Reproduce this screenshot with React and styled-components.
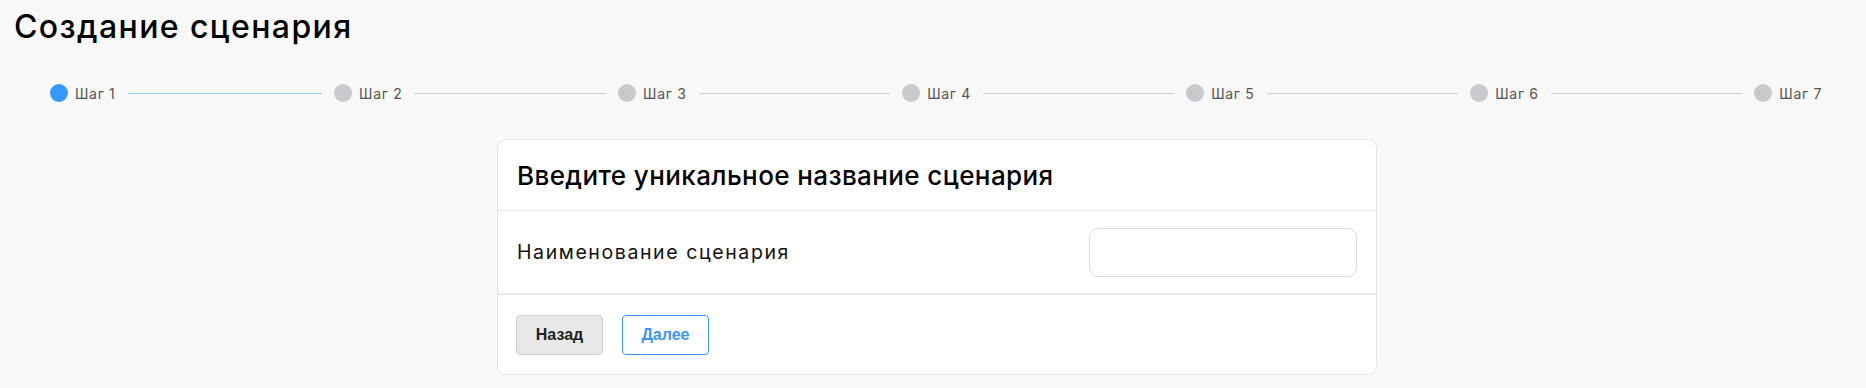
import React from 'react';
import styled, { createGlobalStyle } from 'styled-components';

const GlobalStyle = createGlobalStyle`
  html, body {
    margin: 0;
    padding: 0;
    background: #f8f8f8;
  }
  body {
    font-family: Inter, "Open Sans", sans-serif;
    color: #111;
  }
`;

const Page = styled.div`
  padding: 7px 0 0 14px;
`;

const Title = styled.h1`
  margin: 0;
  font-size: 32px;
  font-weight: 500;
  line-height: 40px;
  letter-spacing: 1.4px;
  color: #000;
`;

const Steps = styled.div`
  display: flex;
  align-items: center;
  width: 1772px;
  height: 20px;
  margin: 36px 0 0 36px;
`;

const Step = styled.div`
  display: flex;
  align-items: center;
  flex: ${(p) => (p.$last ? '0 0 auto' : '1 1 0')};
`;

const Dot = styled.span`
  width: 18px;
  height: 18px;
  border-radius: 50%;
  flex: none;
  background: ${(p) => (p.$active ? '#3399ff' : '#c9c9cd')};
`;

const StepLabel = styled.span`
  margin-left: 7px;
  font-size: 14px;
  color: #555;
  white-space: nowrap;
  letter-spacing: 0.7px;
`;

const Line = styled.span`
  flex: 1;
  height: 1px;
  margin: 0 12px;
  background: ${(p) => (p.$active ? '#9cc9f5' : '#cccccc')};
`;

const Card = styled.div`
  width: 880px;
  box-sizing: border-box;
  margin: 36px 0 0 483px;
  background: #fff;
  border: 1px solid #e6e6e6;
  border-radius: 9px;
`;

const CardHeader = styled.div`
  height: 70px;
  display: flex;
  align-items: center;
  padding: 0 19px;
  border-bottom: 1px solid #e6e6e6;
`;

const CardTitle = styled.h2`
  margin: 0;
  font-size: 26px;
  font-weight: 500;
  color: #000;
  letter-spacing: 0.4px;
`;

const CardBody = styled.div`
  height: 82px;
  display: flex;
  align-items: center;
  justify-content: space-between;
  padding: 0 19px 0 19px;
  border-bottom: 2px solid #e6e6e6;
`;

const FieldLabel = styled.label`
  font-size: 19.5px;
  color: #111;
  letter-spacing: 1.6px;
`;

const Input = styled.input`
  width: 268px;
  height: 49px;
  box-sizing: border-box;
  border: 1px solid #dcdcdc;
  border-radius: 9px;
  background: #fff;
  outline: none;
`;

const CardFooter = styled.div`
  height: 79px;
  display: flex;
  align-items: center;
  gap: 19px;
  padding: 0 18px;
`;

const Button = styled.button`
  height: 40px;
  width: 87px;
  padding: 0;
  border-radius: 4px;
  font-family: "Liberation Sans", Arial, sans-serif;
  font-weight: bold;
  font-size: 16px;
  cursor: pointer;
  background: ${(p) => (p.$primary ? '#fff' : '#e8e8e8')};
  color: ${(p) => (p.$primary ? '#3b94fb' : '#222')};
  border: 1px solid ${(p) => (p.$primary ? '#3399ff' : '#cfcfcf')};
`;

const steps = ['Шаг 1', 'Шаг 2', 'Шаг 3', 'Шаг 4', 'Шаг 5', 'Шаг 6', 'Шаг 7'];

export default function App() {
  return (
    <Page>
      <GlobalStyle />
      <Title>Создание сценария</Title>
      <Steps>
        {steps.map((s, i) => {
          const last = i === steps.length - 1;
          return (
            <Step key={s} $last={last}>
              <Dot $active={i === 0} />
              <StepLabel>{s}</StepLabel>
              {!last && <Line $active={i === 0} />}
            </Step>
          );
        })}
      </Steps>
      <Card>
        <CardHeader>
          <CardTitle>Введите уникальное название сценария</CardTitle>
        </CardHeader>
        <CardBody>
          <FieldLabel>Наименование сценария</FieldLabel>
          <Input type="text" />
        </CardBody>
        <CardFooter>
          <Button>Назад</Button>
          <Button $primary>Далее</Button>
        </CardFooter>
      </Card>
    </Page>
  );
}
